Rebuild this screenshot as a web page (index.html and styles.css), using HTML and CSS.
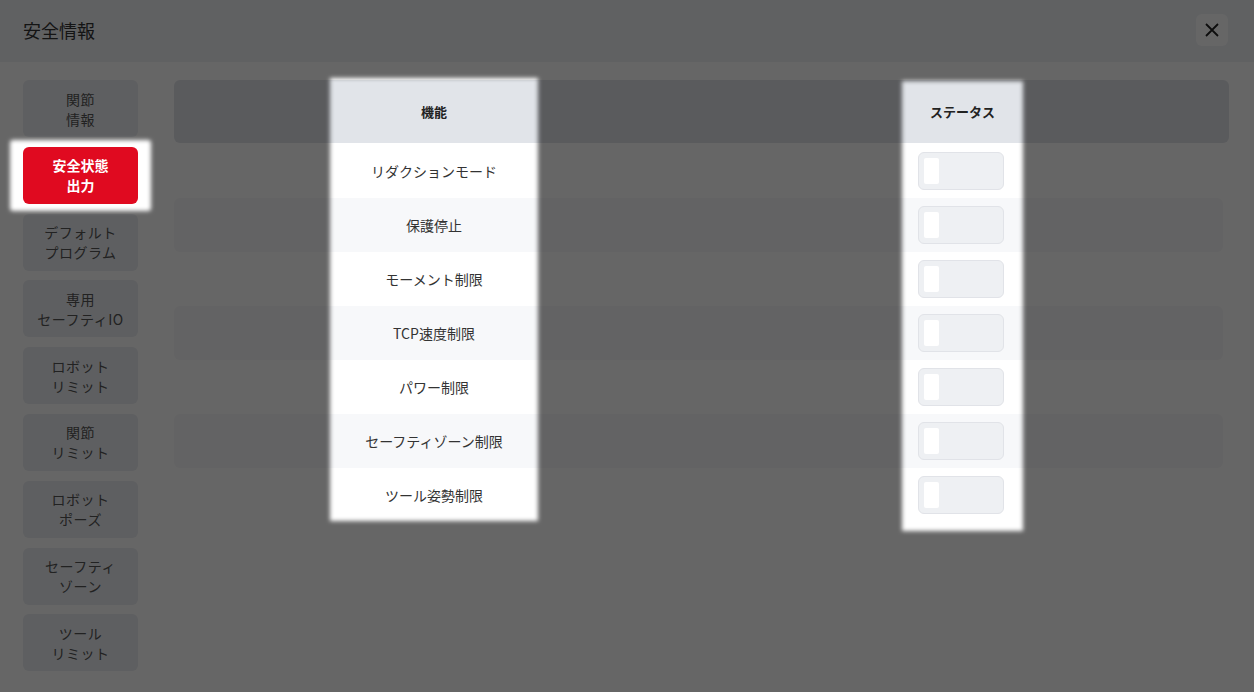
FILE: index.html
```html
<!DOCTYPE html>
<html lang="ja">
  <head>
    <meta charset="UTF-8" />
    <meta name="viewport" content="width=device-width, initial-scale=1.0" />
    <title>安全情報</title>
    <link rel="stylesheet" href="styles.css">
  </head>
  <body>
    <div class="page">
      <div class="header">
        <div class="title">安全情報</div>
        <button class="close-button" aria-label="閉じる">
          <svg width="16" height="16" viewBox="0 0 16 16">
            <path d="M2 2 L14 14 M14 2 L2 14" stroke="#222" stroke-width="1.8" fill="none" />
          </svg>
        </button>
      </div>
      <div class="layout">
        <div class="sidebar">
          <div class="side-button">関節<br />情報</div>
          <div class="side-button active">安全状態<br />出力</div>
          <div class="side-button">デフォルト<br />プログラム</div>
          <div class="side-button">専用<br />セーフティIO</div>
          <div class="side-button">ロボット<br />リミット</div>
          <div class="side-button">関節<br />リミット</div>
          <div class="side-button">ロボット<br />ポーズ</div>
          <div class="side-button">セーフティ<br />ゾーン</div>
          <div class="side-button">ツール<br />リミット</div>
        </div>
        <div class="table">
          <div class="table-head">
            <div class="cell"></div>
            <div class="cell">機能</div>
            <div class="cell"></div>
            <div class="cell">ステータス</div>
            <div class="cell"></div>
          </div>
          <div id="tableBody"></div>
        </div>
      </div>

      <!-- tour overlay with spotlight holes -->
      <svg class="overlay" width="1254" height="692">
        <defs>
          <filter id="soft" x="-20%" y="-20%" width="140%" height="140%">
            <feGaussianBlur stdDeviation="2.2" />
          </filter>
          <mask id="holes" maskUnits="userSpaceOnUse" x="0" y="0" width="1254" height="692">
            <rect width="1254" height="692" fill="white" />
            <g fill="black" filter="url(#soft)">
              <rect x="10" y="140" width="141" height="71" rx="3" />
              <rect x="330" y="78" width="208" height="443" />
              <rect x="902" y="81" width="121" height="450" />
            </g>
          </mask>
        </defs>
        <rect width="1254" height="692" fill="rgba(0, 0, 0, 0.6)" mask="url(#holes)" />
      </svg>
    </div>
    <script>
      const functions = [
        "リダクションモード",
        "保護停止",
        "モーメント制限",
        "TCP速度制限",
        "パワー制限",
        "セーフティゾーン制限",
        "ツール姿勢制限",
      ];

      const tableBody = document.getElementById("tableBody");
      functions.forEach((name, i) => {
        const row = document.createElement("div");
        row.classList.add("table-row");
        if (i % 2 === 1) row.classList.add("striped");
        row.innerHTML =
          '<div class="cell"></div>' +
          '<div class="cell">' + name + "</div>" +
          '<div class="cell"></div>' +
          '<div class="cell"><div class="toggle"><span class="knob"></span></div></div>' +
          '<div class="cell"></div>';
        tableBody.appendChild(row);
      });
    </script>
  </body>
</html>
```

FILE: styles.css
```css
body {
  margin: 0;
  font-family: "Noto Sans CJK JP", "Noto Sans", sans-serif;
  background-color: #ffffff;
  color: #333333;
}
.page {
  position: relative;
  width: 1254px;
  height: 692px;
  overflow: hidden;
}
.header {
  display: flex;
  align-items: center;
  justify-content: space-between;
  height: 62px;
  padding: 0 26px 0 23px;
  background-color: #f0f2f6;
}
.title {
  margin-bottom: 3px;
  font-size: 18px;
  color: #333333;
}
.close-button {
  display: flex;
  align-items: center;
  justify-content: center;
  width: 32px;
  height: 32px;
  margin-bottom: 3px;
  padding: 0;
  border: none;
  border-radius: 6px;
  background-color: #ffffff;
  cursor: pointer;
}
.layout {
  display: flex;
  gap: 36px;
  padding: 18px 25px 0 23px;
}
.sidebar {
  display: flex;
  flex-direction: column;
  gap: 9.8px;
  width: 115px;
  flex-shrink: 0;
}
.side-button {
  display: flex;
  align-items: center;
  justify-content: center;
  height: 57px;
  border-radius: 6px;
  background-color: #ebedf2;
  font-size: 14px;
  line-height: 20px;
  letter-spacing: 0.5px;
  text-align: center;
  color: #555555;
}
.side-button.active {
  background-color: #e00a20;
  color: #ffffff;
  font-weight: bold;
  letter-spacing: 0;
}
.table {
  flex: 1;
}
.table-head,
.table-row {
  display: grid;
  grid-template-columns: 156px 208px 365px 119px 1fr;
  align-items: center;
  text-align: center;
  font-size: 14px;
}
.table-head {
  height: 63px;
  border-radius: 6px;
  background-color: #e1e4e9;
  font-weight: bold;
  font-size: 13px;
  color: #222222;
}
.table-row {
  height: 54px;
  margin-right: 6px;
  border-radius: 6px;
  color: #333333;
}
.table-row:first-child {
  margin-top: 1px;
}
.table-row.striped {
  background-color: #f7f8fa;
}
.cell {
  display: flex;
  align-items: center;
  justify-content: center;
  height: 100%;
}
.toggle {
  box-sizing: border-box;
  width: 86px;
  height: 38px;
  margin-right: 3px;
  padding: 5px;
  border: 1px solid #e1e3e8;
  border-radius: 6px;
  background-color: #eef0f3;
}
.knob {
  display: block;
  width: 15px;
  height: 26px;
  border-radius: 2px;
  background-color: #ffffff;
}
.overlay {
  position: absolute;
  top: 0;
  left: 0;
  pointer-events: none;
}
```
